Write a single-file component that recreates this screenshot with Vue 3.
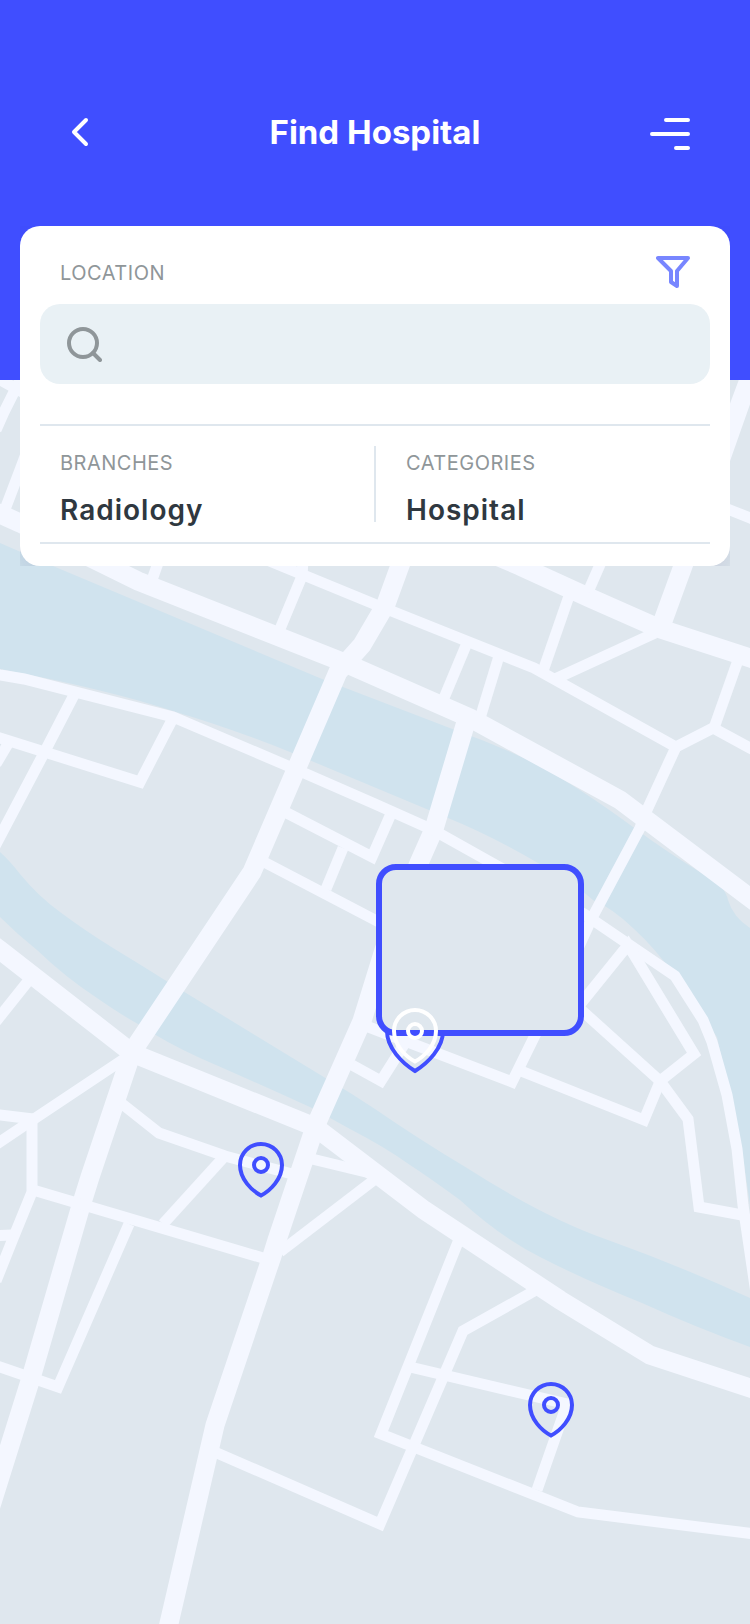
<script setup>
import { ref } from 'vue'

const query = ref('')

const facets = [
  { label: 'BRANCHES', value: 'Radiology' },
  { label: 'CATEGORIES', value: 'Hospital' },
]

const mainRoads = [
  '-20,504 0,514 20,523 138,581 345,663 470,718 620,800 750,898 770,913',
  '402,560 386,604 362,645 338,672 252,872 132,1052 90,1177 80,1209 31,1378 -10,1509',
  '469,712 434,829 419,863 384,950 362,1021 315,1127 277,1240 272,1256 215,1425 164,1645',
  '-20,935 0,950 132,1053 315,1127 424,1210 560,1300 650,1355 750,1388 780,1398',
  '480,549 520,566 590,598 658,628 750,658 780,667',
  '660,629 683,566 740,404 756,361',
]

const sideStreets = [
  '20,380 4,412 -4,430',
  '-10,374 24,393',
  '4,512 20,470 26,454',
  '720,506 730,510 750,518 760,522',
  '267,560 374,604 534,668 676,747 713,728 750,748 760,753',
  '714,728 737,663',
  '676,747 646,812 640,828 592,918 575,955',
  '602,560 588,592',
  '569,596 543,671',
  '655,633 555,679',
  '467,643 444,698',
  '499,656 481,715',
  '159,560 152,580',
  '303,560 302,576 280,629',
  '-10,673 0,675 24,679 173,717 295,769 375,804 433,830 492,863 584,914 675,976 703,1020 712,1042 727,1095 737,1149 743,1205 757,1300',
  '74,695 43,755 -6,848',
  '-10,735 0,738 140,782 172,720',
  '9,742 -4,764',
  '285,812 372,857 390,816',
  '343,848 326,889',
  '264,862 375,920 390,928',
  '29,980 -6,1024',
  '124,1059 34,1119 -6,1146',
  '-10,1114 0,1115 33,1119',
  '32,1119 32,1192 12,1241 -4,1281',
  '-10,1236 12,1235',
  '33,1190 263,1258',
  '129,1224 58,1387 0,1367 -10,1364',
  '121,1103 159,1133 225,1156 292,1174',
  '223,1158 163,1224',
  '312,1159 374,1174',
  '374,1180 280,1252',
  '366,1026 512,1082 545,1015',
  '352,1065 381,1081 405,1043',
  '521,1071 644,1120 659,1084',
  '660,1081 578,1007 628,945 694,1054 660,1081 688,1119 699,1207 742,1215',
  '458,1242 381,1434 578,1512 755,1534',
  '536,1290 463,1331 380,1524 217,1453',
  '410,1367 567,1404 537,1490',
]

const smallPin = 'M23 2C11.400 2 2 11.400 2 23C2 37 13.500 48.500 23 53.500C32.500 48.500 44 37 44 23C44 11.400 34.600 2 23 2Z'

const pins = [
  { name: 'Hospital on the west side', x: 261, y: 1142 },
  { name: 'Hospital on the south side', x: 551, y: 1382 },
]

const place = (x, y) => ({ left: (x / 750) * 100 + '%', top: y + 'px' })
</script>

<template>
  <main class="page">
    <svg class="map" viewBox="0 0 750 1624" preserveAspectRatio="xMidYMin slice" aria-hidden="true">
      <rect width="750" height="1624" fill="#dfe7ee" />
      <path
        fill="#d0e3ee"
        d="M0 543L53 566L322 679L455 730Q500 746 538 765Q580 788 633 827Q665 851 708 877Q725 886 728 900Q733 917 750 928V1205L742 1150L717 1037L675 976Q655 948 633 928Q612 908 593 900Q567 877 538 863Q490 835 448 818L290 752Q230 728 176 712Q110 690 0 669Z"
      />
      <path
        fill="#d0e3ee"
        d="M0 852Q10 861 20 874Q38 896 60 912Q84 930 113 948Q141 965 168 982L327 1079Q351 1093 375 1109Q420 1140 467 1168Q545 1218 608 1240Q680 1266 750 1298V1347Q695 1327 642 1303Q585 1280 542 1258Q500 1237 460 1200Q430 1178 410 1165Q385 1147 350 1129L312 1108Q255 1082 200 1058Q165 1042 138 1024Q120 1014 97 998Q65 977 37 950Q18 935 0 917Z"
      />
      <g class="roads">
        <polyline v-for="line in mainRoads" :key="line" :points="line" stroke-width="19" />
        <polyline v-for="line in sideStreets" :key="line" :points="line" stroke-width="11" />
      </g>
    </svg>

    <header class="header">
      <button class="icon-button back" type="button" aria-label="Back">
        <svg width="20" height="32" viewBox="0 0 20 32">
          <path d="M16 4L4 16L16 28" stroke-width="4" stroke-linecap="round" stroke-linejoin="round" />
        </svg>
      </button>
      <h1 class="title">Find Hospital</h1>
      <button class="icon-button" type="button" aria-label="Menu">
        <svg width="40" height="32" viewBox="0 0 40 32">
          <path d="M16 4H38M2 18H38M26 32H38" stroke-width="4" stroke-linecap="round" />
        </svg>
      </button>
    </header>

    <div class="card-frame">
      <section class="card">
        <div class="card-top">
          <label class="label" for="location">LOCATION</label>
          <button class="icon-button filter" type="button" aria-label="Filter">
            <svg width="36" height="36" viewBox="0 0 36 36">
              <path d="M2 3H32L21 16V31L15 27V16Z" stroke-width="4" stroke-linejoin="round" />
            </svg>
          </button>
        </div>
        <div class="search">
          <svg width="36" height="36" viewBox="0 0 36 36" aria-hidden="true">
            <circle cx="17" cy="17" r="14" />
            <path d="M27 27L34 34" stroke-linecap="round" />
          </svg>
          <input id="location" v-model="query" class="search-input" type="text" />
        </div>
        <dl class="facets">
          <div v-for="facet in facets" :key="facet.label" class="facet">
            <dt class="label">{{ facet.label }}</dt>
            <dd class="value">{{ facet.value }}</dd>
          </div>
        </dl>
      </section>
    </div>

    <svg class="pin halo" :style="place(415, 1001)" width="60" height="74" viewBox="0 0 60 74" aria-hidden="true">
      <path d="M30 2C14.500 2 2 14.500 2 30C2 47 17 62 30 70C43 62 58 47 58 30C58 14.500 45.500 2 30 2Z" />
    </svg>
    <div class="preview" :style="place(376, 864)"></div>
    <button class="pin selected" type="button" aria-label="Selected hospital" :style="place(415, 1008)">
      <svg width="46" height="56" viewBox="0 0 46 56">
        <path :d="smallPin" />
        <circle cx="23" cy="23" r="7" />
      </svg>
    </button>
    <button
      v-for="pin in pins"
      :key="pin.name"
      class="pin"
      type="button"
      :aria-label="pin.name"
      :style="place(pin.x, pin.y)"
    >
      <svg width="46" height="56" viewBox="0 0 46 56">
        <path :d="smallPin" />
        <circle cx="23" cy="23" r="7" />
      </svg>
    </button>
  </main>
</template>

<style>
body {
  margin: 0;
}
</style>

<style scoped>
.page {
  position: relative;
  min-height: 1624px;
  overflow: hidden;
  background: #dfe7ee;
  font-family: Inter, "Liberation Sans", sans-serif;
}

.map {
  position: absolute;
  inset: 0;
  width: 100%;
  height: 100%;
}

.roads {
  fill: none;
  stroke: #f4f7ff;
  stroke-miterlimit: 10;
}

button {
  margin: 0;
  padding: 0;
  border: 0;
  background: none;
  cursor: pointer;
}

button svg {
  display: block;
}

.header {
  position: relative;
  display: grid;
  grid-template-columns: 1fr auto 1fr;
  align-items: center;
  padding: 100px 60px 216px;
  background: #404eff;
}

.icon-button {
  justify-self: end;
  fill: none;
  stroke: #fff;
}

.back {
  justify-self: start;
  padding: 0 10px;
}

.header .icon-button svg {
  overflow: visible;
}

.title {
  margin: 0;
  color: #fff;
  font-size: 33px;
  font-weight: 700;
  line-height: 64px;
}

.card-frame {
  position: relative;
  margin: -154px 20px 0;
  overflow: hidden;
}

.card {
  padding: 20px 20px 22px;
  border-radius: 20px;
  background: #fff;
  box-shadow: 0 12px 26px rgba(16, 30, 90, 0.12);
}

.card-top {
  display: flex;
  align-items: center;
  justify-content: space-between;
  height: 54px;
  margin-bottom: 4px;
  padding: 0 18px 0 20px;
}

.label {
  color: #8f9699;
  font-size: 20px;
  line-height: 34px;
  letter-spacing: 0.025em;
}

.filter {
  stroke: #7886ff;
}

.search {
  display: flex;
  align-items: center;
  gap: 16px;
  height: 80px;
  padding: 0 26px;
  border-radius: 20px;
  background: #e9f1f5;
}

.search svg {
  flex: none;
  fill: none;
  stroke: #8f9699;
  stroke-width: 4;
}

.search-input {
  flex: 1;
  min-width: 0;
  height: 60px;
  padding: 0;
  border: 0;
  outline: 0;
  background: transparent;
  color: #2f3840;
  font: 24px Inter, "Liberation Sans", sans-serif;
}

.facets {
  display: grid;
  grid-template-columns: 1fr 1fr;
  margin: 40px 0 0;
  padding: 20px 0;
  border-top: 2px solid #dfe7ee;
  border-bottom: 2px solid #dfe7ee;
}

.facet {
  padding-left: 20px;
}

.facet + .facet {
  padding-left: 30px;
  border-left: 2px solid #dfe7ee;
  margin-left: -1px;
}

.value {
  margin: 18px 0 0;
  color: #2f3840;
  font-size: 28px;
  font-weight: 600;
  line-height: 24px;
  letter-spacing: 1px;
}

.pin {
  position: absolute;
  translate: -50% 0;
  fill: none;
  stroke: #404eff;
  stroke-width: 4;
}

.selected {
  stroke: #fff;
}

.preview {
  position: absolute;
  box-sizing: border-box;
  width: 208px;
  height: 172px;
  border: 6px solid #404eff;
  border-radius: 20px;
  background: #dfe7ee;
}
</style>
